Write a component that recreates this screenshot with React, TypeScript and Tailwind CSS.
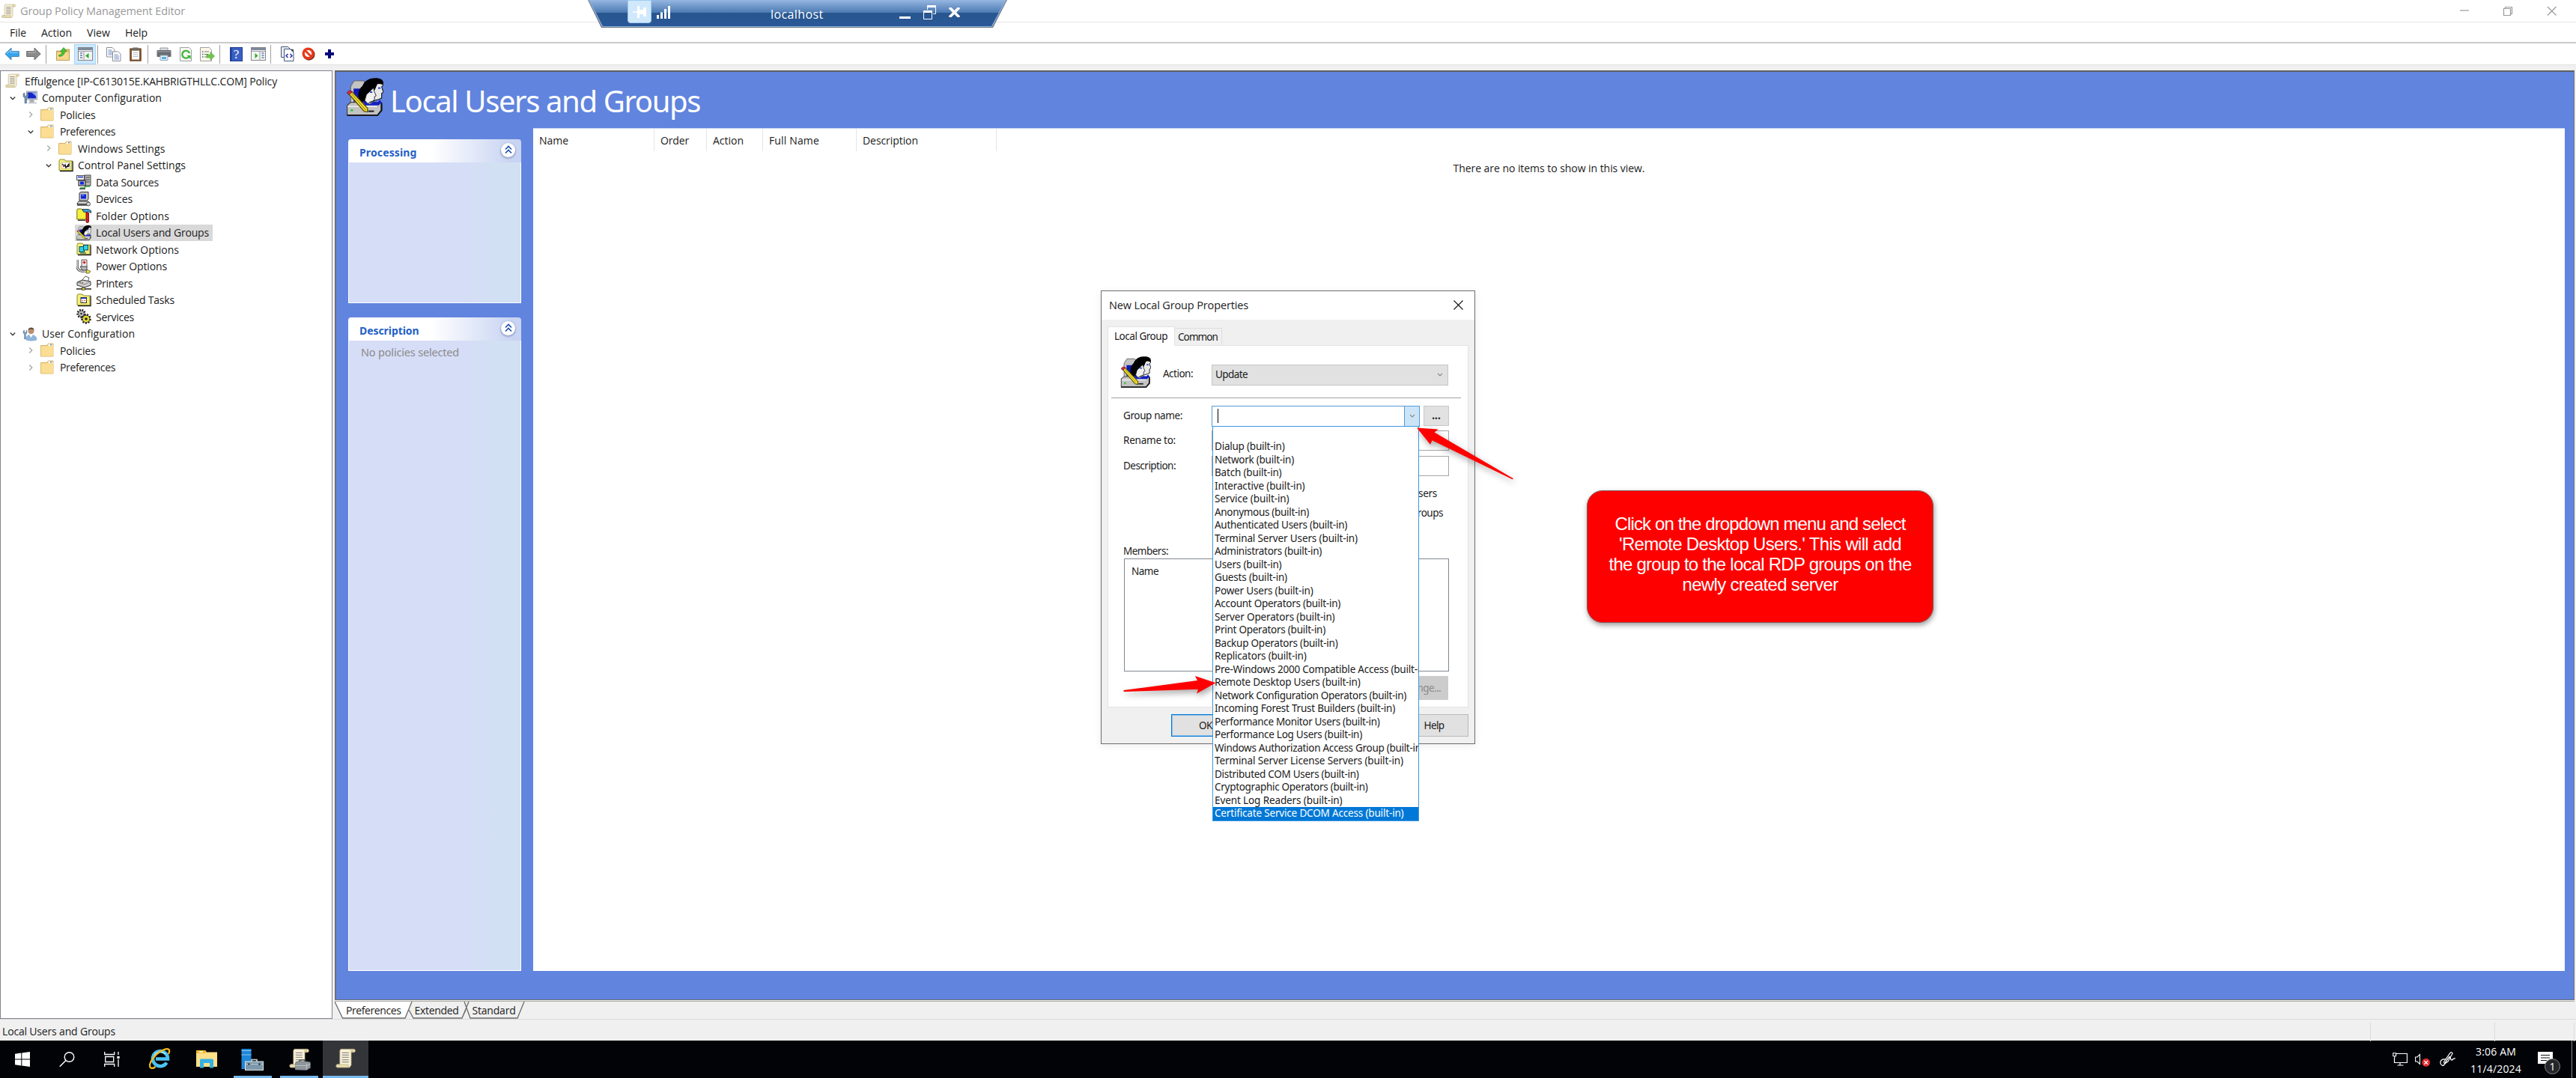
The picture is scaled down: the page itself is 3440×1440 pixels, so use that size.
import React, { useLayoutEffect, useRef } from "react";

/* Text run tracked so that it fills an exact advance width. */
function T({ w, c = "", children }: { w: number; c?: string; children: string }) {
  const ref = useRef<HTMLSpanElement>(null);
  useLayoutEffect(() => {
    const el = ref.current;
    if (!el) return;
    el.style.letterSpacing = "0px";
    const natural = el.getBoundingClientRect().width;
    el.style.letterSpacing = `${(w - natural) / children.length}px`;
  }, [w, children]);
  return (
    <span ref={ref} className={`inline-block shrink-0 whitespace-pre ${c}`}>
      {children}
    </span>
  );
}

type IconProps = { c?: string };

/* ---------- icons ---------- */

function Scroll({ c = "w-5 h-5" }: IconProps) {
  return (
    <svg viewBox="0 0 20 20" className={c}>
      <path d="M5 1h12.500c1.500 0 1.800 2.500.3 3H15v12l-1.500 2.500H2c-1.800 0-1.800-3 0-3h2.200V2.500z" fill="#f8f1d3" stroke="#b5a987" strokeWidth=".6" />
      <path d="M15 1.200c2.600-.6 3.600 2.500 1.200 2.900H14z" fill="#d6c998" />
      <path d="M1.600 15.800h10.600v2.600H2c-1.400 0-1.600-2-.4-2.600z" fill="#eadfae" stroke="#b5a987" strokeWidth=".5" />
      <path d="M6.200 4.500h6.500M6.200 6.700h6.500M6.200 8.900h6.500M6.200 11.100h6.500M6.200 13.300h6.500" stroke="#8f8f98" strokeWidth=".9" />
    </svg>
  );
}

function Folder() {
  return (
    <svg viewBox="0 0 20 20" className="h-5 w-5">
      <path d="M.5 3.500h8l2-2.500h6.500v17H.5z" fill="#e9c46f" stroke="#cfa655" strokeWidth=".8" />
      <path d="M.8 4.300h8.700l1.300-1.600h6.200v15H.8z" fill="#fbdd93" />
      <rect x="10.500" y="1.600" width="5.500" height="2.200" fill="#fff" />
      <rect x="13" y="1.800" width="2.200" height="1.600" fill="#4e96d6" />
    </svg>
  );
}

function ComputerCfg() {
  return (
    <svg viewBox="0 0 20 20" className="h-5 w-5">
      <rect x="5.500" y="1" width="14" height="11" fill="#c8ccd4" stroke="#8a909c" strokeWidth=".8" />
      <rect x="7" y="2.400" width="11" height="8" fill="#1425c8" />
      <path d="M12 2.400h6v5z" fill="#8aa8f0" />
      <path d="M10 12h5l1 4H9z" fill="#a6abb5" />
      <rect x="8" y="15.500" width="11" height="2" fill="#c9cdd4" />
      <path d="M1 4v4l2 2v7h2.600v-7l2-2V4L6 3v4H3V3z" fill="#7390b0" stroke="#4b6480" strokeWidth=".5" />
    </svg>
  );
}

function UserCfg() {
  return (
    <svg viewBox="0 0 20 20" className="h-5 w-5">
      <path d="M5 18c0-5 2-7 6-7s8 2 8 7c-3 1.500-11 1.500-14 0z" fill="#8fb6dc" stroke="#6f97c0" strokeWidth=".5" />
      <path d="M9 11l2.500 4 2.500-4z" fill="#fff" />
      <circle cx="11.500" cy="6" r="4" fill="#b98d6d" />
      <path d="M7.500 5C7.500.5 15.500 0 15.500 5c-1-1.500-6-2-8 0z" fill="#5a4a40" />
      <path d="M1 6v3l1.500 1.500V17h2v-6.500L6 9V6L5 5v3H2.500V5z" fill="#7c9cbc" stroke="#4b6480" strokeWidth=".4" />
    </svg>
  );
}

function YellowFolder({ children }: { children: React.ReactNode }) {
  return (
    <svg viewBox="0 0 20 20" className="h-5 w-5">
      <path d="M2 17.500h17V5l-1-1" fill="none" stroke="#222" strokeWidth="1.500" />
      <path d="M1 4l1-2h6l1.500 2H18v12.500H1z" fill="#f6f07a" stroke="#8d8a2c" strokeWidth="1" />
      {children}
    </svg>
  );
}

function ControlPanel() {
  return (
    <YellowFolder>
      <rect x="4" y="6" width="11.500" height="8" fill="#fff" stroke="#999" strokeWidth=".5" />
      <path d="M5 8l3 3 1-2 1 4 4-5v3l-2 1" fill="none" stroke="#111" strokeWidth="1.300" />
      <path d="M6 12l2-2" stroke="#d22" strokeWidth="1.200" />
    </YellowFolder>
  );
}

function DataSources() {
  return (
    <svg viewBox="0 0 20 20" className="h-5 w-5">
      <rect x="11" y="1" width="8" height="14" fill="#b9b9b9" stroke="#222" strokeWidth=".8" />
      <path d="M12.500 4h5M12.500 7h5M12.500 10h5" stroke="#444" />
      <rect x=".5" y="1.500" width="10" height="6" fill="#e6e6e6" stroke="#333" strokeWidth=".8" />
      <path d="M2 3.500h7" stroke="#1a2ad0" strokeWidth="1.400" />
      <rect x="3" y="8" width="9" height="7" fill="#c9c9c9" stroke="#111" />
      <rect x="5" y="9.500" width="5" height="4" fill="#1226e0" />
      <path d="M5 18h6l1-2h6" fill="none" stroke="#2c8f3a" strokeWidth="1.500" />
      <path d="M4 19.300h8" stroke="#111" />
    </svg>
  );
}

function Devices() {
  return (
    <svg viewBox="0 0 20 20" className="h-5 w-5">
      <path d="M4 2l2-1.500h10V10l-2 2H4z" fill="#c4c4c4" stroke="#222" strokeWidth=".9" />
      <rect x="6" y="3.500" width="7" height="6" fill="#1226e0" />
      <path d="M7 5h3" stroke="#aac" />
      <path d="M3 13h13l2 3.500H.8z" fill="#dcdcdc" stroke="#222" strokeWidth=".9" />
      <path d="M1 18h14" stroke="#111" strokeWidth="1.300" />
      <circle cx="16" cy="16.500" r="2.500" fill="#d6d6d6" stroke="#333" strokeWidth=".8" />
    </svg>
  );
}

function FolderOptions() {
  return (
    <svg viewBox="0 0 20 20" className="h-5 w-5">
      <path d="M.8 3l1-2h5l1.500 2H14v12H.8z" fill="#f6f03c" stroke="#6f6c14" />
      <path d="M2 16.200h10" stroke="#111" strokeWidth="1.200" />
      <path d="M8 1.500h8l3.500 2v3l-3-2-3 1-4-.5z" fill="#3da0d8" stroke="#123" strokeWidth=".8" />
      <path d="M13 6h3.500v12.500c-1 1.500-3.500 1-3.500 0z" fill="#d8201c" stroke="#500" strokeWidth=".8" />
    </svg>
  );
}

function NetworkOptions() {
  return (
    <YellowFolder>
      <rect x="4" y="6.500" width="6.500" height="7" fill="#2ed3e0" stroke="#0b4b63" />
      <rect x="9.500" y="4.500" width="6" height="6.500" fill="#2ed3e0" stroke="#0b4b63" />
      <path d="M5 15h8" stroke="#0b4b63" />
    </YellowFolder>
  );
}

function PowerOptions() {
  return (
    <svg viewBox="0 0 20 20" className="h-5 w-5">
      <path d="M7 1h7v10H7z" fill="#eee" stroke="#333" strokeWidth=".8" />
      <path d="M8.500 4.500h4M10.500 2.500v4" stroke="#e01818" strokeWidth="1.600" />
      <path d="M1 1v8c0 6 4 7.500 9 7h5" fill="none" stroke="#222" strokeWidth="3.200" />
      <path d="M1 1v8c0 6 4 7.500 9 7h5" fill="none" stroke="#cfcfcf" strokeWidth="1.800" />
      <path d="M5 10h9v5H8z" fill="#b7b7b7" stroke="#222" strokeWidth=".8" />
      <path d="M14 14l5 2.500-2 2.500h-4z" fill="#e8df36" stroke="#444" strokeWidth=".7" />
    </svg>
  );
}

function Printers() {
  return (
    <svg viewBox="0 0 20 20" className="h-5 w-5">
      <path d="M7 7l5-6 5 2-2 6z" fill="#fff" stroke="#333" strokeWidth=".8" />
      <path d="M1 9l7-3 11 2v5l-8 3-10-3z" fill="#cfcfcf" stroke="#222" strokeWidth=".9" />
      <path d="M1 9l10 3 8-4" fill="none" stroke="#777" strokeWidth=".8" />
      <circle cx="5" cy="9" r="1" fill="#1fa53a" />
      <circle cx="8" cy="9.600" r=".9" fill="#d22" />
      <path d="M0 18h20" stroke="#222" strokeWidth="1.500" />
      <rect x="7.500" y="16.500" width="4" height="3" fill="#d9c92c" stroke="#222" strokeWidth=".6" />
    </svg>
  );
}

function ScheduledTasks() {
  return (
    <YellowFolder>
      <rect x="6" y="6.500" width="7.500" height="7" fill="#fff" stroke="#333" />
      <path d="M6 7.300h7.500" stroke="#1a2ad0" strokeWidth="1.500" />
      <path d="M8 10.500h1M10.500 10.500h1.500M8 12.300h1" stroke="#d22" />
    </YellowFolder>
  );
}

function Services() {
  return (
    <svg viewBox="0 0 20 20" className="h-5 w-5">
      <circle cx="6.500" cy="6" r="5" fill="none" stroke="#222" strokeWidth="2.400" strokeDasharray="2 1.400" />
      <circle cx="6.500" cy="6" r="3.800" fill="#c9c9c9" stroke="#333" strokeWidth=".8" />
      <circle cx="6.500" cy="6" r="1.300" fill="#222" />
      <circle cx="13" cy="13" r="5.600" fill="none" stroke="#222" strokeWidth="2.400" strokeDasharray="2.200 1.600" />
      <circle cx="13" cy="13" r="4.800" fill="#e6dc30" stroke="#222" strokeWidth=".8" />
      <circle cx="13" cy="13" r="1.800" fill="#222" />
    </svg>
  );
}

function LocalUsers({ c = "w-5 h-5" }: IconProps) {
  return (
    <svg viewBox="0 0 32 32" preserveAspectRatio="none" className={c}>
      <path d="M4 21V7l3-4.500h8l2 2v16z" fill="#c4c4c4" stroke="#666" strokeWidth=".7" />
      <path d="M6.500 9h6v11h-6z" fill="#1018b8" />
      <path d="M1 23l3-2.500h26v6.500l-3 4.500H1z" fill="#c3c3c3" stroke="#444" strokeWidth=".8" />
      <path d="M1 31.300h26l3.500-4V21" fill="none" stroke="#111" strokeWidth="1.200" />
      <path d="M1.500 24h25" stroke="#eee" />
      <path d="M19 28h5" stroke="#222" strokeWidth="1.300" />
      <rect x="4" y="26.500" width="2" height="1.400" fill="#12c81e" />
      <path d="M19 8c0-3 3-5 8-5 4 0 5 0 5 3l-1.500 1.500L32 12l-1.500 1v4l-2.500 1-7 2z" fill="#e9e9e9" stroke="#111" strokeWidth=".7" />
      <path d="M14 7C16 1 23-.5 28 .4c3 .5 4.500 2.500 3.700 5.600-2-1-4-1.500-5-.5l-2 4.500-5 5z" fill="#000" />
      <path d="M12 20c-3-6-1-13 5-14.500 4-.8 7 .5 7.500 3.500L20 13l-3 8z" fill="#000" />
      <path d="M17.500 14l6-5.500.7 3 1.600 3.500-1.400.7v2.300l-1.400 1.500-3 1L19 22l-3-3z" fill="#f1f1f1" stroke="#222" strokeWidth=".6" />
      <path d="M20.500 12h2M27.500 8.500h2" stroke="#1230c8" strokeWidth="1.100" />
      <path d="M14 19l6 3 4-2 3 .5 2-2 1.500 2-2.500 2.500h-8L16 23z" fill="#1420c4" />
      <path d="M2.500 13.500l13 14.500 2.800.6.200-3L5 11.500z" fill="#f3e634" stroke="#5a4a00" strokeWidth=".8" />
      <path d="M4 12.500L17 27" stroke="#a58c10" strokeWidth=".7" />
      <path d="M.8 12.500l2-1.800 2.600.8-2.900 2.600z" fill="#d8285a" stroke="#611" strokeWidth=".5" />
    </svg>
  );
}

function WinChevron({ open }: { open: boolean }) {
  return open ? (
    <svg viewBox="0 0 8 8" className="h-2 w-2">
      <path d="M.8 2.500L4 5.700l3.200-3.200" fill="none" stroke="#404040" strokeWidth="1.500" />
    </svg>
  ) : (
    <svg viewBox="0 0 8 8" className="h-2 w-2">
      <path d="M2.300.5L5.800 4 2.300 7.500" fill="none" stroke="#a6a6a6" strokeWidth="1.300" />
    </svg>
  );
}

/* ---------- tree ---------- */

type Node = { d: number; t: string; w: number; i: React.ReactNode; open?: boolean; sel?: boolean };

const tree: Node[] = [
  { d: 0, t: "Computer Configuration", w: 160, i: <ComputerCfg />, open: true },
  { d: 1, t: "Policies", w: 47.500, i: <Folder />, open: false },
  { d: 1, t: "Preferences", w: 74, i: <Folder />, open: true },
  { d: 2, t: "Windows Settings", w: 116.500, i: <Folder />, open: false },
  { d: 2, t: "Control Panel Settings", w: 144, i: <ControlPanel />, open: true },
  { d: 3, t: "Data Sources", w: 84, i: <DataSources /> },
  { d: 3, t: "Devices", w: 49, i: <Devices /> },
  { d: 3, t: "Folder Options", w: 98, i: <FolderOptions /> },
  { d: 3, t: "Local Users and Groups", w: 151, i: <LocalUsers />, sel: true },
  { d: 3, t: "Network Options", w: 111, i: <NetworkOptions /> },
  { d: 3, t: "Power Options", w: 95, i: <PowerOptions /> },
  { d: 3, t: "Printers", w: 49, i: <Printers /> },
  { d: 3, t: "Scheduled Tasks", w: 105, i: <ScheduledTasks /> },
  { d: 3, t: "Services", w: 51, i: <Services /> },
  { d: 0, t: "User Configuration", w: 124, i: <UserCfg />, open: true },
  { d: 1, t: "Policies", w: 47.500, i: <Folder />, open: false },
  { d: 1, t: "Preferences", w: 74, i: <Folder />, open: false },
];

const indent = ["pl-[5px]", "pl-[29px]", "pl-[53px]", "pl-[77px]"];

function TreeRow({ n }: { n: Node }) {
  return (
    <div className={`flex h-[22.5px] items-center ${indent[n.d]}`}>
      <div className="flex w-[22px] justify-center">{n.open !== undefined && <WinChevron open={n.open} />}</div>
      <div className={`flex h-[22px] items-center gap-1.5 pl-0.5 pr-[5px] ${n.sel ? "bg-[#d9d9d9]" : ""}`}>
        {n.i}
        <T w={n.w}>{n.t}</T>
      </div>
    </div>
  );
}

/* ---------- toolbar ---------- */

const Sep = () => <div className="h-[25px] w-px bg-[#a0a0a0]" />;

function Toolbar() {
  return (
    <div className="flex h-7 items-center">
      <div className="flex w-[61px] items-center gap-[9px] pl-1.5">
        <svg viewBox="0 0 20 18" className="h-[18px] w-5">
          <path d="M.8 9L9 1v4.500h10.300v7H9V17z" fill="#35a5ee" stroke="#4b86b4" strokeWidth="1" />
          <path d="M3 9l5-5v3h10" fill="none" stroke="#9bd8fb" />
        </svg>
        <svg viewBox="0 0 20 18" className="h-[18px] w-5">
          <path d="M19.200 9L11 1v4.500H.7v7H11V17z" fill="#8b8b8b" stroke="#6c6c6c" strokeWidth="1" />
          <path d="M2 7h10V4" fill="none" stroke="#b9b9b9" />
        </svg>
      </div>
      <Sep />
      <div className="flex w-[37px] pl-[13px]">
        <svg viewBox="0 0 18 18" className="h-[18px] w-[18px]">
          <path d="M.5 5h8l2-2h7v14.500H.5z" fill="#e8bf68" stroke="#b08d3c" strokeWidth=".8" />
          <path d="M1 7h16v10H1z" fill="#f7d78c" />
          <path d="M3 11c4-1 5-3 5-5H5.500L10 .5l4 5h-2.500c0 4-3 6.500-7 7z" fill="#45c436" stroke="#268a1c" strokeWidth=".7" />
        </svg>
      </div>
      <div className="flex h-[27px] w-[29px] items-center justify-center border border-[#a9d5f5] bg-[#cce8ff]">
        <svg viewBox="0 0 20 18" className="h-[18px] w-5">
          <rect x=".5" y=".5" width="19" height="17" fill="#f4f4f4" stroke="#84878c" />
          <rect x="1" y="1" width="18" height="3" fill="#7e8a9a" />
          <path d="M1 5.500h18" stroke="#9a9fa8" />
          <path d="M3 8h3M3 11h3M3 14h3" stroke="#5f7fae" strokeWidth="1.500" />
          <path d="M8 6v12" stroke="#9a9a9a" />
          <path d="M14.500 8v7L10 11.500z" fill="#2fae2a" />
        </svg>
      </div>
      <div className="ml-0.5"><Sep /></div>
      <div className="flex w-[66px] items-center gap-[11px] pl-[11px]">
        <svg viewBox="0 0 20 19" className="h-[19px] w-5">
          <path d="M.5.500h7.500l3 3v9.500H.5z" fill="#fff" stroke="#8a8f98" />
          <path d="M2.500 4h5M2.500 6h6M2.500 8h6M2.500 10h6" stroke="#7593bf" />
          <path d="M8.500 6h7l3.500 3v9.500H8.500z" fill="#fff" stroke="#8a8f98" />
          <path d="M10.500 10h5M10.500 12h6.500M10.500 14h6.500M10.500 16h6.500" stroke="#7593bf" />
        </svg>
        <svg viewBox="0 0 16 19" className="h-[19px] w-4">
          <rect x=".8" y="2" width="14.400" height="16.200" fill="#8a5a32" stroke="#5f3a1c" />
          <rect x="3" y="4.500" width="10" height="12" fill="#fff" />
          <rect x="4.500" y=".5" width="7" height="4" fill="#6d6d6d" />
          <path d="M4.500 7.500h7M4.500 10h7M4.500 12.500h7" stroke="#b4bccb" />
        </svg>
      </div>
      <Sep />
      <div className="flex w-[95px] items-center gap-[11px] pl-[11px]">
        <svg viewBox="0 0 20 18" className="h-[18px] w-5">
          <path d="M5 1h10v6H5z" fill="#d9dde2" stroke="#9a9a9a" />
          <rect x=".5" y="4" width="19" height="9" rx="1" fill="#6a6d72" />
          <path d="M1 6h18" stroke="#9da1a8" />
          <path d="M5 11h10v6.500H5z" fill="#eaf4fb" stroke="#8fa6b8" />
          <path d="M7 13h6v3H7z" fill="#58b0e0" />
        </svg>
        <svg viewBox="0 0 16 19" className="h-[19px] w-4">
          <path d="M.5.500h12l3 3v15H.5z" fill="#f6f6f4" stroke="#a0a0a0" />
          <path d="M12.500 12.500A5 5 0 1 1 13 8" fill="none" stroke="#34b52e" strokeWidth="2.200" />
          <path d="M9.500 11h5v5z" fill="#34b52e" />
        </svg>
        <svg viewBox="0 0 20 19" className="h-[19px] w-5">
          <path d="M.5.500h12l3 3v15H.5z" fill="#fbf8e8" stroke="#a0a0a0" />
          <path d="M3 6h1.500M3 9.500h1.500M3 13h1.500" stroke="#3c5ea8" strokeWidth="1.500" />
          <path d="M6 6h6M6 9.500h5M6 13h4" stroke="#7b7b7b" />
          <path d="M9 10h5V6.500l5.500 5.500L14 17.300V14H9z" fill="#6ecb4a" stroke="#3f9a2c" strokeWidth=".6" />
        </svg>
      </div>
      <Sep />
      <div className="flex w-[67px] items-center gap-[11px] pl-[13px]">
        <div className="flex h-[19px] w-[17px] items-center justify-center border border-[#1c3a94] bg-[#3a5fc4] font-['Liberation_Serif'] text-[17px] leading-none text-white shadow-[inset_2px_0_0_#27479f]">?</div>
        <svg viewBox="0 0 20 18" className="h-[18px] w-5">
          <rect x=".5" y=".5" width="19" height="17" fill="#f4f4f4" stroke="#84878c" />
          <rect x="1" y="1" width="18" height="3" fill="#7e8a9a" />
          <path d="M1 5.500h18" stroke="#9a9fa8" />
          <path d="M14.500 8h3M14.500 11h3M14.500 14h3" stroke="#5f7fae" strokeWidth="1.500" />
          <path d="M12 6v12" stroke="#9a9a9a" />
          <path d="M5.500 8v7l4-3.500z" fill="#2fae2a" />
        </svg>
      </div>
      <Sep />
      <div className="flex items-center gap-2.5 pl-[13px]">
        <svg viewBox="0 0 18 20" className="h-5 w-[18px]">
          <path d="M.5.500h9l3 3v11H.5z" fill="#e9edf3" stroke="#3f5878" />
          <path d="M4.500 3.500h8l4.500 4v12H4.500z" fill="#fff" stroke="#3f5878" />
          <path d="M12 3.500l5 4.500v-4z" fill="#39495e" />
          <path d="M9.500 10L7 12.500 9.500 15M12.500 10l2.500 2.500-2.500 2.500" fill="none" stroke="#2c2ca8" strokeWidth="1.500" />
        </svg>
        <svg viewBox="0 0 18 18" className="h-[18px] w-[18px]">
          <circle cx="9.500" cy="9.700" r="8" fill="#7a2a22" />
          <circle cx="8.500" cy="8.500" r="8" fill="#e8391c" />
          <circle cx="8.500" cy="8.500" r="4.600" fill="#fff" />
          <path d="M4.500 4.500l8 8" stroke="#e8391c" strokeWidth="2.800" />
        </svg>
        <svg viewBox="0 0 12 12" className="ml-[3px] h-3 w-3">
          <path d="M6 0v12M0 6h12" stroke="#05057c" strokeWidth="4" />
        </svg>
      </div>
    </div>
  );
}

/* ---------- remote desktop bar ---------- */

function RdpBar() {
  return (
    <div className="absolute left-[785px] top-0 h-[37px] w-[560px]">
      <div className="absolute inset-0 bg-[#6f7378] [clip-path:polygon(0_0,100%_0,541px_100%,18px_100%)]" />
      <div className="absolute inset-x-0 top-0 h-9 bg-[#8db4e3] [clip-path:polygon(1px_0,559px_0,540px_100%,19px_100%)]" />
      <div className="absolute inset-x-0 top-0 flex h-[35px] bg-[linear-gradient(#95b6e1_0,#4b7ab2_17px,#28568f_17px,#2a5898_100%)] text-white [clip-path:polygon(2px_0,558px_0,539px_100%,20px_100%)]">
        <div className="ml-[53px] flex h-[31px] w-8 items-center justify-center rounded-b-sm border border-[#9ccbf0] bg-[#d0e8fc]">
          <svg viewBox="0 0 18 16" className="h-4 w-[18px]">
            <path d="M0 8h6" stroke="#fff" strokeWidth="1.500" />
            <path d="M6 0h3v5h5V2h4v12h-4v-3H9v5H6z" fill="#fff" />
          </svg>
        </div>
        <svg viewBox="0 0 18 17" className="ml-[7px] mt-2 h-[17px] w-[18px]">
          <path d="M1.500 12v5M6.500 8.500V17M11.500 4v13M16.500 0v17" stroke="#fff" strokeWidth="3" />
        </svg>
        <div className="ml-[134px] flex h-[37px] w-[71px] items-center text-base">
          <T w={70.500}>localhost</T>
        </div>
        <div className="ml-[101px] mt-[22px] h-[3px] w-[15px] bg-white" />
        <svg viewBox="0 0 17 19" className="ml-[17px] mt-[7px] h-[19px] w-[17px]">
          <path d="M5.500 6V1.500h11v10H13" fill="none" stroke="#fff" />
          <path d="M5 1.500h12" stroke="#fff" strokeWidth="3" />
          <path d="M.5 8v10.500h11V8z" fill="none" stroke="#fff" />
          <path d="M0 8.500h12" stroke="#fff" strokeWidth="3" />
        </svg>
        <svg viewBox="0 0 17 13" className="ml-4 mt-2.5 h-[13px] w-[17px]">
          <path d="M2 0l13 13M15 0L2 13" stroke="#fff" strokeWidth="3.600" />
        </svg>
      </div>
    </div>
  );
}

/* ---------- details pane ---------- */

function SideBox({ title, w, h, children }: { title: string; w: number; h: string; children?: React.ReactNode }) {
  return (
    <div className="w-[231px] font-['Noto_Sans']">
      <div className="flex h-[31px] items-center rounded-t bg-[linear-gradient(90deg,#fff_0,#fff_48%,#c8d4f2_95%)] pl-[15px] pr-2">
        <T w={w} c="pt-1 text-[14px] font-bold text-[#1f5fc6]">{title}</T>
        <div className="mb-[3px] ml-auto flex h-[19px] w-[19px] items-center justify-center rounded-full bg-white shadow-[0_1px_2px_1px_#9aa8cc]">
          <svg viewBox="0 0 10 12" className="h-3 w-2.5">
            <path d="M1 5.500l4-4 4 4M1 10.500l4-4 4 4" fill="none" stroke="#1d4fae" strokeWidth="1.700" />
          </svg>
        </div>
      </div>
      <div className={`border border-t-0 border-white bg-[#d6ddf7] ${h}`}>
        <div className="h-full bg-[linear-gradient(90deg,#d6ddf7_65%,#d2e0f3_85%)]">{children}</div>
      </div>
    </div>
  );
}

const columns = [
  { t: "Name", w: 39, c: "w-[162px]" },
  { t: "Order", w: 38, c: "w-[70px]" },
  { t: "Action", w: 41, c: "w-[75px]" },
  { t: "Full Name", w: 67, c: "w-[125px]" },
  { t: "Description", w: 74, c: "w-[187px]" },
];

function DetailsPane() {
  return (
    <div className="flex h-[1242px] w-[2991px] flex-col border-2 border-b border-r border-[#6d6f78] border-t-[#5f6064] bg-[#6184de]">
      <div className="flex h-[75px] items-center pl-[13px]">
        <LocalUsers c="w-[50px] h-[51px] -mt-2" />
        <T w={414} c="ml-[9px] mt-0.5 font-['Noto_Sans'] text-[40px] leading-none text-white">Local Users and Groups</T>
      </div>
      <div className="flex">
        <div className="flex flex-col gap-[19px] pl-4 pt-[15px]">
          <SideBox title="Processing" w={76.500} h="h-[188px]" />
          <SideBox title="Description" w={79.500} h="h-[842px]">
            <div className="flex h-8 items-center pl-4 text-[14.500px] text-[#8b8b8b]">
              <T w={131}>No policies selected</T>
            </div>
          </SideBox>
        </div>
        <div className="ml-4 h-[1126px] w-[2713px] border-t border-[#c5d3f5] bg-white">
          <div className="flex h-[30px]">
            {columns.map((c) => (
              <div key={c.t} className={`flex h-full items-center border-r border-[#e5e5e5] pl-2 pt-px ${c.c}`}>
                <T w={c.w}>{c.t}</T>
              </div>
            ))}
          </div>
          <div className="mt-[12px] flex justify-center">
            <T w={256}>There are no items to show in this view.</T>
          </div>
        </div>
      </div>
    </div>
  );
}

function PaneTabs() {
  return (
    <div className="relative -mt-px flex h-6 items-center">
      <svg viewBox="0 0 260 24" className="absolute left-0 top-0 h-6 w-[260px]">
        <path d="M0 1L10.500 23H94L103 1z" fill="#fff" />
        <path d="M0 1L10.500 23H94L103 1" fill="none" stroke="#6c6c6c" strokeWidth="1.300" />
        <path d="M99 12l6 11h65l9-22M173 1l8 22h63l9-22M170 23l5-11" fill="none" stroke="#6c6c6c" strokeWidth="1.300" />
      </svg>
      <div className="relative flex gap-[18px] pl-[15px]">
        <T w={73.500}>Preferences</T>
        <T w={59}>Extended</T>
        <T w={58}>Standard</T>
      </div>
    </div>
  );
}

/* ---------- dialog ---------- */

const groups: [string, number][] = [
  ["Dialup (built-in)", 93.500],
  ["Network (built-in)", 106],
  ["Batch (built-in)", 89.500],
  ["Interactive (built-in)", 120.500],
  ["Service (built-in)", 99.500],
  ["Anonymous (built-in)", 126],
  ["Authenticated Users (built-in)", 177],
  ["Terminal Server Users (built-in)", 191],
  ["Administrators (built-in)", 143],
  ["Users (built-in)", 89.500],
  ["Guests (built-in)", 97],
  ["Power Users (built-in)", 131.500],
  ["Account Operators (built-in)", 168],
  ["Server Operators (built-in)", 160.500],
  ["Print Operators (built-in)", 148],
  ["Backup Operators (built-in)", 164.500],
  ["Replicators (built-in)", 122.500],
  ["Pre-Windows 2000 Compatible Access (built-in)", 286],
  ["Remote Desktop Users (built-in)", 194.500],
  ["Network Configuration Operators (built-in)", 256],
  ["Incoming Forest Trust Builders (built-in)", 241],
  ["Performance Monitor Users (built-in)", 220.500],
  ["Performance Log Users (built-in)", 197],
  ["Windows Authorization Access Group (built-in)", 279.500],
  ["Terminal Server License Servers (built-in)", 252],
  ["Distributed COM Users (built-in)", 192.500],
  ["Cryptographic Operators (built-in)", 204.500],
  ["Event Log Readers (built-in)", 170.500],
  ["Certificate Service DCOM Access (built-in)", 252.500],
];

function Label({ t, w, c }: { t: string; w: number; c: string }) {
  return (
    <div className={`flex items-center ${c}`}>
      <T w={w}>{t}</T>
    </div>
  );
}

const DownMark = () => (
  <svg viewBox="0 0 8 6" className="h-1.5 w-2">
    <path d="M1 1l3 3 3-3" fill="none" stroke="#8a8a8a" strokeWidth="1.200" />
  </svg>
);

function Dialog() {
  return (
    <div className="absolute left-[1470px] top-[388px] h-[606px] w-[500px] border border-[#6d6d6d] bg-[#f0f0f0] font-['Noto_Sans'] text-[13.500px] shadow-[0_2px_10px_rgba(0,0,0,0.08)]">
      <div className="flex h-[38px] items-center justify-between bg-white pb-px pl-2.5 pr-[15px] font-['Open_Sans'] text-[14.500px]">
        <T w={186}>New Local Group Properties</T>
        <svg viewBox="0 0 13 13" className="h-[13px] w-[13px]">
          <path d="M.5.500l12 12M12.500.500l-12 12" stroke="#111" strokeWidth="1.100" />
        </svg>
      </div>
      <div className="flex h-[34px] items-end pl-2">
        <div className="-mb-px flex h-[26px] w-[90px] items-center border border-b-0 border-[#e3e3e3] bg-white pl-2">
          <T w={71}>Local Group</T>
        </div>
        <div className="flex h-[23px] w-[63px] items-center border border-b-0 border-l-0 border-[#dedede] pl-1">
          <T w={53}>Common</T>
        </div>
      </div>
      <div className="mx-2 h-[484px] w-[482px] border border-[#e3e3e3] bg-white">
        <div className="ml-1 mr-[9px] flex h-[70px] items-center border-b border-[#a0a0a0] pl-3 pr-[17px]">
          <LocalUsers c="w-[41px] h-[42px]" />
          <Label t="Action:" w={40} c="ml-4 h-8 pt-1.5" />
          <div className="ml-auto mt-2 flex h-7 w-[316px] items-center justify-between border border-[#c6c6c6] bg-[#e1e1e1] pl-1 pr-1.5">
            <T w={43}>Update</T>
            <DownMark />
          </div>
        </div>
        <div className="flex h-[43px] pl-5 pt-[10px]">
          <Label t="Group name:" w={79} c="h-[26px] w-[118px]" />
          <div className="flex h-[28px] w-[278px] border border-[#559bd6] bg-white">
            <div className="ml-[7px] mt-[3px] h-[19px] w-px bg-black" />
            <div className="ml-auto flex w-5 items-center justify-center border-l border-[#559bd6] bg-[#cce4f7]">
              <DownMark />
            </div>
          </div>
          <div className="ml-[5px] flex h-[27px] w-[34px] items-center justify-center border border-[#c8c8c8] bg-[#e1e1e1] font-bold">
            <span>...</span>
          </div>
        </div>
        <div className="flex h-[34px] pl-5">
          <Label t="Rename to:" w={70} c="h-[26px] w-[118px]" />
          <div className="h-[27px] w-[317px] border border-[#a6a6a6]" />
        </div>
        <div className="flex h-[37px] pl-5">
          <Label t="Description:" w={70} c="h-[26px] w-[118px]" />
          <div className="h-[27px] w-[317px] border border-[#a6a6a6]" />
        </div>
        <div className="flex h-[26px] items-center justify-end pr-[41px]">
          <T w={33}>users</T>
        </div>
        <div className="flex h-[26px] items-center justify-end pr-[33px]">
          <T w={42}>groups</T>
        </div>
        <div className="mt-[29px] flex h-[18px] items-center pl-5">
          <T w={60}>Members:</T>
        </div>
        <div className="ml-[21px] mt-px h-[151px] w-[434px] border border-[#828790] pl-[9px] pt-1.5">
          <T w={36}>Name</T>
        </div>
        <div className="ml-auto mr-[26px] mt-[6px] flex h-8 w-[97px] items-center justify-end bg-[#cccccc] pr-2.5 text-[#8a8a8a]">
          <T w={54}>Change...</T>
        </div>
      </div>
      <div className="flex h-[48px] items-center pl-[93px]">
        <div className="flex h-[30px] w-[92px] items-center justify-center border border-[#0078d7] bg-[#e1e1e1] shadow-[inset_0_0_0_1px_#8cc0ea]">
          <T w={18}>OK</T>
        </div>
        <div className="ml-auto mr-2 flex h-[30px] w-[92px] items-center justify-center border border-[#b9b9b9] bg-[#e1e1e1]">
          <T w={27}>Help</T>
        </div>
      </div>
    </div>
  );
}

function GroupList() {
  return (
    <div className="absolute left-[1619px] top-[569px] w-[276px] overflow-hidden border border-[#3f97dd] bg-white font-['Noto_Sans'] text-[13.500px] leading-none">
      <div className="h-[18px]" />
      {groups.map(([t, w], i) => (
        <div key={t} className={`flex h-[17.500px] items-center pl-0.5 ${i === groups.length - 1 ? "bg-[#0078d7] text-white" : ""}`}>
          <T w={w}>{t}</T>
        </div>
      ))}
    </div>
  );
}

function Annotations() {
  return (
    <>
      <svg viewBox="0 0 560 400" className="absolute left-[1480px] top-[560px] h-[400px] w-[560px] drop-shadow-[2px_4px_4px_rgba(0,0,0,0.35)]">
        <path d="M412 11.500L440.600 13.500 435.500 17.500 540.500 79q.8 1.200-1 1.200L432.500 28.300 430 33.700z" fill="#f00" />
        <path d="M143.500 352.300L116 343l3 6L20.500 362q-.5 1.500 1 2l98.500-3.300-2 5.800z" fill="#f00" />
      </svg>
      <div className="absolute left-[2119px] top-[655px] flex h-[177px] w-[463px] flex-col items-center justify-center rounded-[21px] border border-[#8a5a5a] bg-[#ff0000] pb-2 font-['Liberation_Sans'] text-[24px] leading-[27px] text-white shadow-[1px_3px_7px_rgba(0,0,0,0.4)]">
        <T w={388}>Click on the dropdown menu and select</T>
        <T w={377}>'Remote Desktop Users.' This will add</T>
        <T w={404}>the group to the local RDP groups on the</T>
        <T w={208}>newly created server</T>
      </div>
    </>
  );
}

/* ---------- taskbar ---------- */

function Taskbar() {
  return (
    <div className="flex h-[50px] w-full items-stretch bg-[#010307] text-white">
      <svg viewBox="0 0 20 20" className="ml-5 mt-[15px] h-5 w-5">
        <path d="M0 2.800l8.300-1.200v8H0zM9.300 1.500L20 0v9.600H9.300zM0 10.500h8.300v8L0 17.300zM9.300 10.500H20V20L9.300 18.600z" fill="#fff" />
      </svg>
      <svg viewBox="0 0 21 21" className="ml-[39px] mt-[15px] h-[21px] w-[21px]">
        <circle cx="13.500" cy="7" r="6.300" fill="none" stroke="#fff" strokeWidth="1.400" />
        <path d="M9 11.500L.8 19.800" stroke="#fff" strokeWidth="1.500" />
      </svg>
      <svg viewBox="0 0 21 20" className="ml-[39px] mt-[15px] h-5 w-[21px]">
        <path d="M.7 0v3.500h13V0M.7 20v-3.500h13V20M1.700 6.500h11v7h-11zM19 0v4M19 10v10" fill="none" stroke="#fff" strokeWidth="1.300" />
        <rect x="17.300" y="6" width="3.400" height="3" fill="#fff" />
      </svg>
      <svg viewBox="0 0 29 28" className="ml-[39px] mt-2.5 h-7 w-[29px]">
        <path d="M23.500 19.500A10 10 0 1 1 25 14.500H9" fill="none" stroke="#4cc3f2" strokeWidth="4.600" />
        <path d="M22 8A9.500 9.500 0 0 0 7 10" fill="none" stroke="#a4e6fc" strokeWidth="1.500" />
        <path d="M26 8C29 2 26-1 18 3 8 8-1 20 1.500 25.500c1 2 4 2 7-.5" fill="none" stroke="#f5b91c" strokeWidth="2.300" />
      </svg>
      <svg viewBox="0 0 28 24" className="ml-[34px] mt-[13px] h-6 w-7">
        <path d="M0 0h12l2 2.500h14V22H0z" fill="#ffe08a" />
        <path d="M0 0h12l1.500 2.500L12 4H0z" fill="#f5b82c" />
        <rect x="4" y="1.300" width="5" height="1.600" fill="#fff" />
        <path d="M5 23.500V13q0-1.500 1.500-1.500h15Q23 11.500 23 13v10.500h-5V17h-8v6.500z" fill="#36b0e3" />
      </svg>
      <div className="ml-[22px] w-[51px] border-b-[3px] border-[#76b9ed] pl-2.5 pt-[11px]">
        <svg viewBox="0 0 30 29" className="h-[29px] w-[30px]">
          <rect x=".5" y="0" width="13" height="27" fill="#1f86d8" />
          <path d="M.5 2.500h13M.5 8h13" stroke="#8cc8f4" />
          <path d="M14 17v-2.500h7V17" fill="none" stroke="#c9d3da" strokeWidth="1.600" />
          <rect x="5.500" y="17" width="24" height="11.500" fill="#7d98aa" stroke="#dfe7ec" />
          <path d="M6 20.500h23" stroke="#b6c8d4" />
          <circle cx="10.500" cy="20.500" r="1.200" fill="#28343c" />
          <circle cx="24.500" cy="20.500" r="1.200" fill="#28343c" />
        </svg>
      </div>
      <div className="relative ml-[11px] w-[51px] border-b-[3px] border-[#76b9ed] pl-3 pt-2.5">
        <Scroll c="w-[28px] h-[28px]" />
        <svg viewBox="0 0 21 15" className="absolute left-5 top-[25px] h-[15px] w-[21px]">
          <path d="M6 4V1.500l7-1V4" fill="none" stroke="#4f565c" strokeWidth="1.500" />
          <path d="M0 5.500L4 3h12.500l4 1v7.500l-5 3L0 14z" fill="#8f979d" stroke="#555c62" strokeWidth=".7" />
          <path d="M0 8.500h15.500l5-2M15.500 6v8" stroke="#c3cacf" fill="none" strokeWidth=".8" />
        </svg>
      </div>
      <div className="ml-1.5 w-[61px] border-b-[3px] border-[#76b9ed] bg-[#343539] pl-[17px] pt-2.5">
        <Scroll c="w-[28px] h-[28px]" />
      </div>
      <svg viewBox="0 0 20 18" className="ml-auto mt-4 h-[18px] w-5">
        <path d="M5 1.500h14.500v12H2.500V7M10 13.500V17M6.500 17h8" fill="none" stroke="#fff" strokeWidth="1.200" />
        <path d="M.8.800h3.800v4H.8zM2.700 4.500v3" fill="#010307" stroke="#fff" strokeWidth="1.100" />
      </svg>
      <svg viewBox="0 0 22 18" className="ml-2.5 mt-[17px] h-[18px] w-[22px]">
        <path d="M.6 5h2.400l3.500-3.500v13L3 11H.6z" fill="none" stroke="#fff" strokeWidth="1.100" />
        <circle cx="14.700" cy="12.300" r="5.500" fill="#e0262f" />
        <path d="M12.300 9.900l4.800 4.800M17.100 9.900l-4.800 4.800" stroke="#fff" strokeWidth="1.300" />
      </svg>
      <svg viewBox="0 0 22 22" className="ml-[11px] mt-3.5 h-[22px] w-[22px]">
        <path d="M5.500 14.500L14 2.500q2-1.800 3.200.5L11 14l-4.500 3z" fill="none" stroke="#fff" strokeWidth="1.200" />
        <path d="M8 11c-5-1-7.500 2-7 5s4 5 5.500 1.500C8 14 11 10 13 7.500c2.500 2 1 4.500 3 4.500s1.500-3 5-2" fill="none" stroke="#fff" strokeWidth="1.300" />
      </svg>
      <div className="ml-[17px] mt-[3px] flex w-[72px] flex-col items-center text-[14px] leading-[23px]">
        <T w={54}>3:06 AM</T>
        <T w={68}>11/4/2024</T>
      </div>
      <div className="relative ml-5 w-[45px]">
        <svg viewBox="0 0 20 20" className="mt-[15px] h-5 w-5">
          <path d="M0 0h20v16h-6l-3 3.500V16H0z" fill="#fff" />
          <path d="M4 4.500h12M4 8h12M4 11.500h8" stroke="#111" strokeWidth="1.100" />
        </svg>
        <div className="absolute left-[9px] top-6 flex h-[21px] w-[21px] items-center justify-center rounded-full border border-[#8a8a8a] bg-[#25262a] text-[14px] leading-none">1</div>
      </div>
      <div className="mr-[5px] w-px bg-[#8a8a8a]" />
    </div>
  );
}

export default function App() {
  return (
    <div className="relative h-[1440px] w-[3440px] overflow-hidden bg-[#f0f0f0] font-['Open_Sans',sans-serif] text-[14px] leading-normal text-[#1b1b1b]">
      <div className="flex h-[30px] items-center border-b border-[#e6e6e6] bg-white pl-0.5 pr-[26px]">
        <Scroll c="w-5 h-5" />
        <T w={220} c="ml-[5px] text-[14.500px] text-[#999999]">Group Policy Management Editor</T>
        <svg viewBox="0 0 130 14" className="-mt-px ml-auto h-3.5 w-[130px]">
          <path d="M1 7h12" stroke="#999" strokeWidth="1.200" />
          <path d="M59.500 4.500h9v9h-9zM61.500 4.500v-2h9v9h-2M118 2l11.500 11.500M129.500 2L118 13.500" fill="none" stroke="#999" strokeWidth="1.200" />
        </svg>
      </div>
      <div className="flex h-7 items-center gap-5 border-b-2 border-[#cbcbcd] bg-white pl-[13px] pt-px">
        <T w={22}>File</T>
        <T w={41}>Action</T>
        <T w={31}>View</T>
        <T w={30}>Help</T>
      </div>
      <div className="border-b border-[#e2e2e2] bg-white">
        <Toolbar />
      </div>
      <div className="flex h-[1274px] pt-[7px]">
        <div className="h-[1267px] w-[444px] border border-[#80828c] bg-white pt-0.5">
          <div className="flex h-[22.500px] items-center gap-1.5 pl-1.5">
            <Scroll c="w-5 h-5" />
            <T w={337}>Effulgence [IP-C613015E.KAHBRIGTHLLC.COM] Policy</T>
          </div>
          {tree.map((n, i) => (
            <TreeRow key={i} n={n} />
          ))}
        </div>
        <div className="ml-[3px]">
          <DetailsPane />
          <div className="mt-px border-t border-[#a9a9a9]">
            <PaneTabs />
          </div>
        </div>
      </div>
      <div className="flex h-[29px] items-center border-t border-[#dadada] pl-[3px]">
        <T w={151} c="pt-0.5">Local Users and Groups</T>
        <div className="ml-auto mr-0.5 mt-1 flex h-[25px]">
          <div className="w-[166px] border-l border-[#dcdcdc]" />
          <div className="w-[107px] border-x border-[#dcdcdc]" />
        </div>
      </div>
      <Taskbar />
      <Dialog />
      <GroupList />
      <Annotations />
      <RdpBar />
    </div>
  );
}
